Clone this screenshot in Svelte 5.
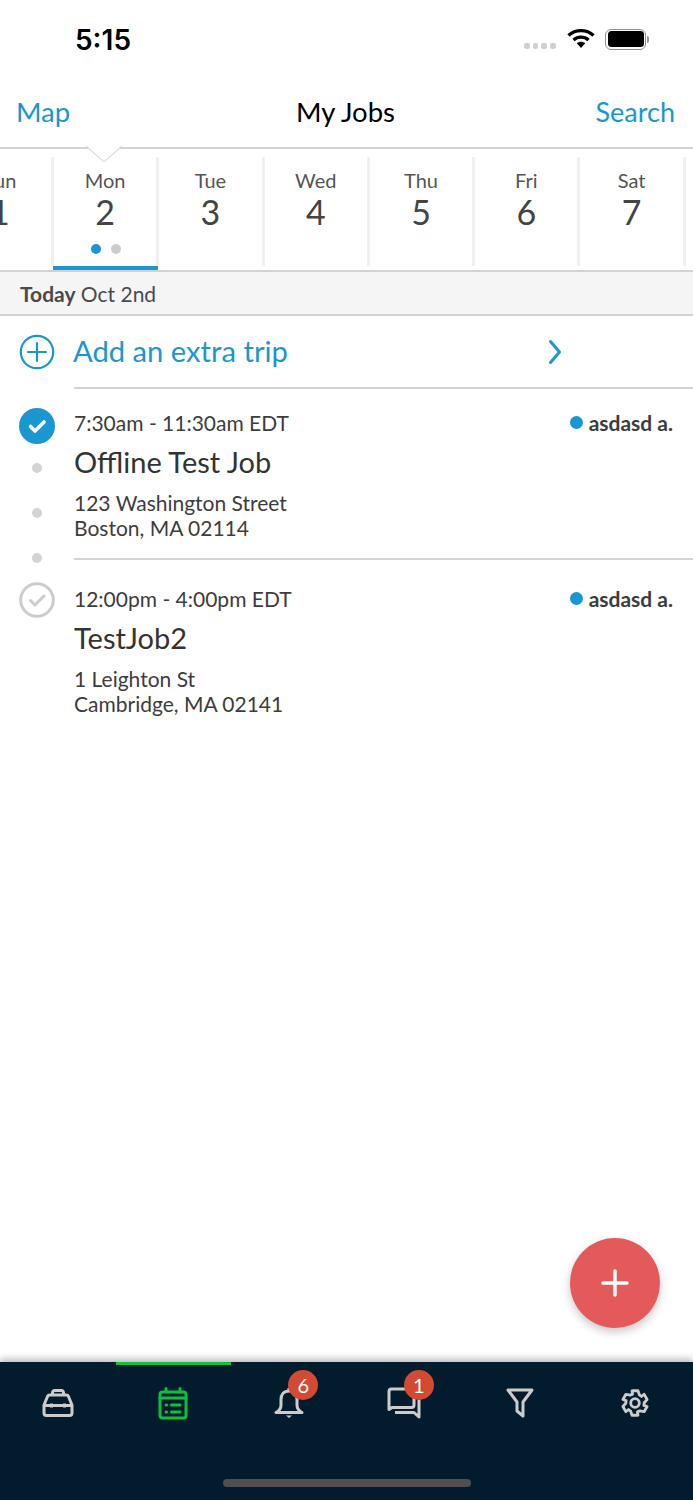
<script lang="ts">
	const days = [
		{ name: 'Sun', num: 1 },
		{ name: 'Mon', num: 2, active: true },
		{ name: 'Tue', num: 3 },
		{ name: 'Wed', num: 4 },
		{ name: 'Thu', num: 5 },
		{ name: 'Fri', num: 6 },
		{ name: 'Sat', num: 7 }
	];

	const jobs = [
		{
			time: '7:30am - 11:30am EDT',
			title: 'Offline Test Job',
			street: '123 Washington Street',
			city: 'Boston, MA 02114',
			done: true
		},
		{
			time: '12:00pm - 4:00pm EDT',
			title: 'TestJob2',
			street: '1 Leighton St',
			city: 'Cambridge, MA 02141',
			done: false
		}
	];

	// six-tooth outline for the settings cog
	const cog = Array.from({ length: 6 }, (_, t) => {
		const a = (t * Math.PI) / 3;
		return [
			[-0.24, 12.6],
			[0.24, 12.6],
			[0.5, 9.2],
			[0.78, 9.2]
		]
			.map(([o, r]) => `${(15 + r * Math.sin(a + o)).toFixed(2)} ${(15 - r * Math.cos(a + o)).toFixed(2)}`)
			.join(' L');
	}).join(' L');
</script>

<div class="page">
	<header class="status">
		<span class="clock">5:15</span>
		<div class="status-icons">
			<div class="signal"><i></i><i></i><i></i><i></i></div>
			<svg class="wifi" width="28" height="21" viewBox="0 0 28 21">
				<path d="M1.5 7.5C8.5 1 19.5 1 26.5 7.5" fill="none" stroke="#000" stroke-width="3.4" />
				<path d="M6.5 12C10.8 8.2 17.2 8.2 21.5 12" fill="none" stroke="#000" stroke-width="3.4" />
				<path d="M9.8 15.2C12.3 13.2 15.7 13.2 18.2 15.2L14 20Z" fill="#000" />
			</svg>
			<div class="battery"><div class="battery-fill"></div></div>
			<div class="battery-cap"></div>
		</div>
	</header>

	<nav class="navbar">
		<span class="nav-link">Map</span>
		<span class="nav-title">My Jobs</span>
		<span class="nav-link right">Search</span>
		<svg class="notch" width="36" height="17" viewBox="0 0 36 17">
			<path d="M0 0L18 16L36 0" fill="#fff" stroke="#d0d0d0" stroke-width="1" />
		</svg>
	</nav>

	<div class="week">
		<div class="week-track">
			{#each days as day}
				<div class="day" class:active={day.active}>
					<span class="day-name">{day.name}</span>
					<span class="day-num">{day.num}</span>
					{#if day.active}
						<div class="day-dots"><i class="blue"></i><i></i></div>
					{/if}
				</div>
			{/each}
		</div>
	</div>

	<div class="today"><strong>Today</strong> Oct 2nd</div>

	<main class="content">
		<div class="add-row">
			<svg class="add-icon" width="36" height="36" viewBox="0 0 36 36">
				<circle cx="18" cy="18" r="16.2" fill="none" stroke="#1a96d1" stroke-width="2.2" />
				<path d="M18 9V27M9 18H27" stroke="#1a96d1" stroke-width="2.2" stroke-linecap="round" />
			</svg>
			<div class="add-body">
				<span class="add-label">Add an extra trip</span>
				<svg class="chevron" width="14" height="26" viewBox="0 0 14 26">
					<path d="M2.500 2.500L11.500 13L2.500 23.500" fill="none" stroke="#1a96d1" stroke-width="3" stroke-linecap="round" stroke-linejoin="round" />
				</svg>
			</div>
		</div>

		{#each jobs as job}
			<article class="job">
				<div class="job-rail">
					{#if job.done}
						<svg width="36" height="36" viewBox="0 0 36 36">
							<circle cx="18" cy="18" r="18" fill="#1a96d1" />
							<path d="M11.500 18.500L16 23L25 14" fill="none" stroke="#fff" stroke-width="3.600" stroke-linecap="round" stroke-linejoin="round" />
						</svg>
						<i class="rail-dot first"></i>
						<i class="rail-dot"></i>
						<i class="rail-dot"></i>
					{:else}
						<svg width="36" height="36" viewBox="0 0 36 36">
							<circle cx="18" cy="18" r="16.300" fill="none" stroke="#cccccc" stroke-width="3" />
							<path d="M11.500 18.500L16 23L25 14" fill="none" stroke="#cccccc" stroke-width="3" stroke-linecap="round" stroke-linejoin="round" />
						</svg>
					{/if}
				</div>
				<div class="job-body" class:last={!job.done}>
					<div class="job-top">
						<span class="job-time">{job.time}</span>
						<span class="job-owner"><i></i>asdasd a.</span>
					</div>
					<h2>{job.title}</h2>
					<p>{job.street}<br />{job.city}</p>
				</div>
			</article>
		{/each}

		<button class="fab" aria-label="Add">
			<svg width="28" height="28" viewBox="0 0 28 28">
				<path d="M14 2V26M2 14H26" stroke="#fff" stroke-width="3.400" stroke-linecap="round" />
			</svg>
		</button>
	</main>

	<footer class="tabbar">
		<div class="tabs">
			<div class="tab">
				<svg width="32" height="28" viewBox="0 0 32 28" fill="none" stroke="#cccccc" stroke-width="3" stroke-linejoin="round">
					<path d="M10.500 6V3.500C10.500 2.500 11.500 1.500 12.500 1.500H19.500C20.500 1.500 21.500 2.500 21.500 3.500V6" />
					<path d="M7.500 6H24.500C25.500 6 26 6.500 26.500 7.500L30 16V24C30 25.500 29 26.500 27.500 26.500H4.500C3 26.500 2 25.500 2 24V16L5.500 7.500C6 6.500 6.500 6 7.500 6Z" />
					<path d="M2 16.500H30M9.500 14.500V18.500M22.500 14.500V18.500" />
				</svg>
			</div>
			<div class="tab current">
				<svg width="30" height="33" viewBox="0 0 30 33" fill="none" stroke="#0cbf3f" stroke-width="3" stroke-linecap="round">
					<rect x="2" y="5" width="26" height="26" rx="2.500" />
					<path d="M8 1.500V5M22 1.500V5M2 11H28M8 18H8.600M8 25H8.600M13.500 18H22M13.500 25H22" />
				</svg>
			</div>
			<div class="tab">
				<svg width="30" height="32" viewBox="0 0 30 32" fill="none" stroke="#cccccc" stroke-width="3" stroke-linejoin="round">
					<path d="M15 4C9.500 4 7 8 7 12.500V18C7 21 5 24 2 25.500H28C25 24 23 21 23 18V12.500C23 8 20.500 4 15 4Z" />
					<path d="M15 1V4" />
					<path d="M12 28.500H18L15 31Z" fill="#cccccc" stroke="none" />
				</svg>
				<span class="badge">6</span>
			</div>
			<div class="tab">
				<svg width="34" height="32" viewBox="0 0 34 32" fill="none" stroke="#cccccc" stroke-width="3" stroke-linejoin="round">
					<path d="M2 22.500V4.500C2 3 3 2 4.500 2H24.500C26 2 27 3 27 4.500V18C27 19.500 26 20.500 24.500 20.500H5Z" />
					<path d="M8 25.500H27L32 30V12.500" />
				</svg>
				<span class="badge">1</span>
			</div>
			<div class="tab">
				<svg width="28" height="30" viewBox="0 0 28 30" fill="none" stroke="#cccccc" stroke-width="3" stroke-linejoin="round">
					<path d="M2 2H26L17 14V28L11 23V14Z" />
				</svg>
			</div>
			<div class="tab">
				<svg width="30" height="30" viewBox="0 0 30 30" fill="none" stroke="#cccccc" stroke-width="2.800" stroke-linejoin="round">
					<circle cx="15" cy="15" r="4.300" />
					<path d="M{cog}Z" />
				</svg>
			</div>
		</div>
		<div class="home-bar"></div>
	</footer>
</div>

<style>
	:global(body) {
		margin: 0;
		background: #fff;
		font-family: Lato, 'Open Sans', sans-serif;
	}

	.page {
		display: flex;
		flex-direction: column;
		height: 1500px;
		overflow: hidden;
		color: #3d3d3d;
	}

	i {
		display: block;
	}

	.status {
		height: 78px;
		display: flex;
		justify-content: space-between;
		padding: 0 44px 0 75px;
		box-sizing: border-box;
	}

	.clock {
		margin-top: 23px;
		font-family: Inter, 'Liberation Sans', sans-serif;
		font-size: 28px;
		line-height: 34px;
		font-weight: 600;
		color: #000;
	}

	.status-icons {
		display: flex;
		align-items: center;
		height: 22px;
		margin-top: 28px;
	}

	.signal {
		display: flex;
		gap: 3px;
		margin: 13px 11px 0 0;
	}

	.signal i {
		width: 5.800px;
		height: 6px;
		border-radius: 2px;
		background: #cfcfcf;
	}

	.wifi {
		margin: -1px 10px 0 0;
	}

	.battery {
		width: 41px;
		height: 21px;
		box-sizing: border-box;
		border: 1.500px solid #8e8e8e;
		border-radius: 6px;
		padding: 1.500px;
	}

	.battery-fill {
		height: 100%;
		background: #000;
		border-radius: 3.500px;
	}

	.battery-cap {
		width: 2px;
		height: 7px;
		margin-left: 1px;
		background: #9a9a9a;
		border-radius: 0 2px 2px 0;
	}

	.navbar {
		position: relative;
		height: 71px;
		box-sizing: border-box;
		padding: 0 18px 2px 16px;
		display: grid;
		grid-template-columns: 1fr auto 1fr;
		align-items: center;
		border-bottom: 2px solid #d2d2d2;
		font-size: 27.500px;
	}

	.nav-link {
		color: #1a96d1;
	}

	.nav-link.right {
		text-align: right;
		font-size: 27px;
	}

	.nav-title {
		color: #000;
		font-size: 27.500px;
	}

	.notch {
		position: absolute;
		left: 86px;
		bottom: -16px;
		z-index: 2;
	}

	.week {
		height: 123px;
		flex: none;
		box-sizing: border-box;
		padding-top: 8px;
		overflow: hidden;
		border-bottom: 2px solid #d2d2d2;
	}

	.week-track {
		display: flex;
		height: 114px;
		margin-left: -51.300px;
	}

	.day {
		position: relative;
		flex: none;
		width: 105.300px;
		height: 109px;
		box-sizing: border-box;
		border-right: 3px solid #f0f0f0;
		display: flex;
		flex-direction: column;
		align-items: center;
		padding-top: 12px;
	}

	.day.active::before {
		content: '';
		position: absolute;
		left: -3px;
		top: 0;
		bottom: 0;
		width: 3px;
		background: #f0f0f0;
	}

	.day.active::after {
		content: '';
		position: absolute;
		left: -1px;
		right: -2px;
		bottom: -4px;
		height: 4px;
		background: #1a96d1;
	}

	.day-name {
		font-size: 20px;
		line-height: 22px;
		color: #555;
	}

	.day-num {
		font-size: 34px;
		line-height: 40px;
		margin-top: 1px;
		color: #444;
	}

	.day-dots {
		display: flex;
		gap: 10px;
		margin: 12px 0 0 2px;
	}

	.day-dots i {
		width: 10px;
		height: 10px;
		border-radius: 50%;
		background: #cccccc;
	}

	.day-dots i.blue {
		background: #1a96d1;
	}

	.today {
		height: 44px;
		flex: none;
		box-sizing: border-box;
		padding-left: 20px;
		line-height: 43px;
		font-size: 21px;
		background: #f5f5f5;
		border-bottom: 2px solid #d2d2d2;
		color: #4a4a4a;
	}

	.today strong {
		font-weight: 700;
		color: #4a4a4a;
	}

	.content {
		position: relative;
		flex: 1;
	}

	.add-row {
		display: flex;
		align-items: flex-start;
		padding-left: 19px;
	}

	.add-icon {
		margin: 18px 19px 0 0;
		flex: none;
	}

	.add-body {
		flex: 1;
		height: 73px;
		box-sizing: border-box;
		display: flex;
		align-items: center;
		justify-content: space-between;
		padding: 0 131px 0 0;
		border-bottom: 2px solid #d2d2d2;
	}

	.add-label {
		font-size: 29.200px;
		color: #1a96d1;
		margin: -2px 0 0 -1px;
	}

	.job {
		display: flex;
		padding-left: 19px;
	}

	.job-rail {
		flex: none;
		width: 36px;
		margin: 19px 19px 0 0;
		display: flex;
		flex-direction: column;
		align-items: center;
	}

	.job:last-child .job-rail {
		margin-top: 23px;
	}

	.rail-dot {
		width: 10px;
		height: 10px;
		border-radius: 50%;
		background: #d4d4d4;
		margin-top: 35px;
	}

	.rail-dot.first {
		margin-top: 19px;
	}

	.job-body {
		flex: 1;
		height: 171px;
		box-sizing: border-box;
		padding: 21px 20px 0 0;
		border-bottom: 2px solid #d2d2d2;
	}

	.job-body.last {
		padding-top: 23px;
		border-bottom: none;
	}

	.job-top {
		display: flex;
		justify-content: space-between;
		align-items: center;
	}

	.job-time {
		font-size: 21px;
		line-height: 26px;
		color: #3d3d3d;
	}

	.job-owner {
		display: flex;
		align-items: center;
		font-size: 21px;
		line-height: 26px;
		font-weight: 700;
		color: #3d3d3d;
	}

	.job-owner i {
		width: 13px;
		height: 13px;
		border-radius: 50%;
		background: #1a96d1;
		margin: -2px 6px 0 0;
	}

	h2 {
		margin: 7px 0 0;
		font-size: 29px;
		line-height: 38px;
		font-weight: 400;
		color: #333;
	}

	p {
		margin: 9px 0 0;
		font-size: 21px;
		line-height: 25px;
		color: #3d3d3d;
	}

	.fab {
		position: absolute;
		right: 33px;
		bottom: 34px;
		width: 90px;
		height: 90px;
		padding: 0;
		border: none;
		border-radius: 50%;
		background: #e45a5a;
		box-shadow: 0 4px 10px rgba(0, 0, 0, 0.22);
		display: flex;
		align-items: center;
		justify-content: center;
	}

	.tabbar {
		position: relative;
		height: 138px;
		flex: none;
		background: #031c2d;
		box-shadow: 0 -3px 7px rgba(0, 0, 0, 0.28);
	}

	.tabs {
		display: flex;
	}

	.tab {
		position: relative;
		flex: 1;
		height: 82px;
		display: flex;
		align-items: center;
		justify-content: center;
	}

	.tab.current::before {
		content: '';
		position: absolute;
		left: 0;
		right: 0;
		top: 0;
		height: 3px;
		background: #0cbf3f;
	}

	.badge {
		position: absolute;
		left: 50%;
		top: 8px;
		margin-left: -0.500px;
		width: 30px;
		height: 30px;
		border-radius: 50%;
		background: #d24a33;
		color: #fff;
		font-size: 20px;
		line-height: 30px;
		text-align: center;
	}

	.home-bar {
		position: absolute;
		left: 223px;
		bottom: 13px;
		width: 248px;
		height: 8px;
		border-radius: 4px;
		background: #4f4f4f;
	}
</style>
